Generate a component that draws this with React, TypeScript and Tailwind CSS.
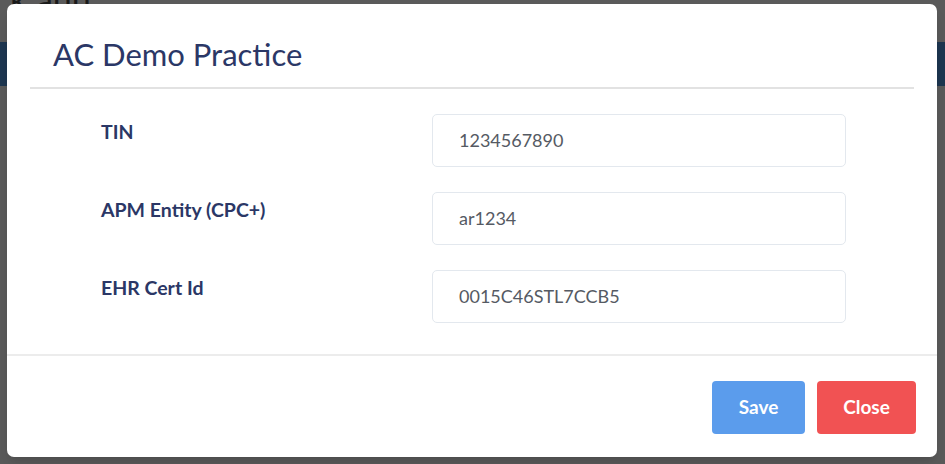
import React from 'react'

// ─── Form data ────────────────────────────────────────────────────────────────

const FIELDS = [
  { label: 'TIN', value: '1234567890' },
  { label: 'APM Entity (CPC+)', value: 'ar1234' },
  { label: 'EHR Cert Id', value: '0015C46STL7CCB5' },
]

const FONT = { fontFamily: 'Lato, "Open Sans", sans-serif' }

// ─── Component ────────────────────────────────────────────────────────────────

export default function App() {
  return (
    <div className="relative w-[945px] h-[464px] overflow-hidden bg-[#5a5a5a]" style={FONT}>
      {/* Page behind the overlay */}
      <div className="h-[4px]" />
      <div className="mt-[38px] h-[44px] bg-[#1d3650]" />
      <div className="absolute -top-[18px] left-[10px] text-[34px] text-[#1a1a1a] leading-none">k ann</div>

      {/* Modal */}
      <div className="absolute left-[7px] top-[4px] w-[930px] h-[453px] bg-white rounded-[7px] flex flex-col shadow-lg">
        <div className="h-[85px] mx-[23px] border-b-2 border-[#e2e2e2] flex items-center pl-[23px] pt-[17px]">
          <h2 className="text-[31px] text-[#2b3766] leading-none">AC Demo Practice</h2>
        </div>

        <div className="h-[267px] pt-[25px] flex flex-col gap-[25px] border-b-2 border-[#ececec]">
          {FIELDS.map((f) => (
            <div key={f.label} className="flex h-[53px]">
              <div className="w-[425px] pl-[94px] pt-[3px] text-[19.5px] font-bold text-[#2b3766]">
                {f.label}
              </div>
              <div className="w-[414px] h-[53px] border border-[#e3e8ee] rounded-[5px] flex items-center pl-[26px] text-[18px] text-[#555a63]">
                {f.value}
              </div>
            </div>
          ))}
        </div>

        <div className="flex-1 flex justify-end items-start gap-[12px] pt-[25px] pr-[21px]">
          <button className="w-[93px] h-[53px] rounded-[4px] bg-[#5b9cec] text-white text-[19px] font-bold">
            Save
          </button>
          <button className="w-[99px] h-[53px] rounded-[4px] bg-[#f15253] text-white text-[19px] font-bold">
            Close
          </button>
        </div>
      </div>
    </div>
  )
}
